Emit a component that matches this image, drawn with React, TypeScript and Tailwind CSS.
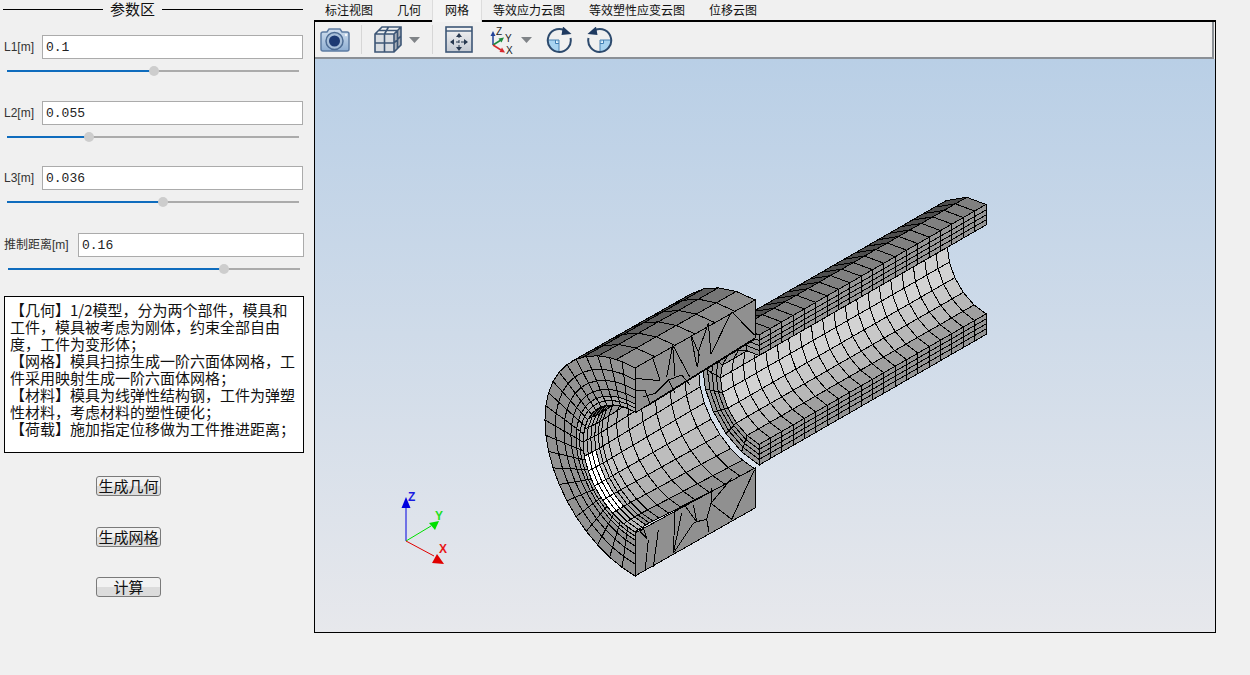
import type { ReactNode } from "react";

type Pt = [number, number];
type Cell = { pts: Pt[]; fill: number };

const params = [
  { label: "L1[m]", value: "0.1", pct: 50.5, gap: "mt-[17px]", labelW: "w-[42px]", inset: "ml-[7px]" },
  { label: "L2[m]", value: "0.055", pct: 28.2, gap: "mt-[29px]", labelW: "w-[42px]", inset: "ml-[7px]" },
  { label: "L3[m]", value: "0.036", pct: 53.4, gap: "mt-[28px]", labelW: "w-[42px]", inset: "ml-[7px]" },
  { label: "推制距离[m]", value: "0.16", pct: 74, gap: "mt-[30px]", labelW: "w-[78px]", inset: "ml-[8px]" },
];

const notes = [
  "【几何】1/2模型，分为两个部件，模具和",
  "工件，模具被考虑为刚体，约束全部自由",
  "度，工件为变形体；",
  "【网格】模具扫掠生成一阶六面体网格，工",
  "件采用映射生成一阶六面体网格；",
  "【材料】模具为线弹性结构钢，工件为弹塑",
  "性材料，考虑材料的塑性硬化；",
  "【荷载】施加指定位移做为工件推进距离；",
];

const tabs = ["标注视图", "几何", "网格", "等效应力云图", "等效塑性应变云图", "位移云图"];

const rad = (d: number) => (d * Math.PI) / 180;
const lerp = (a: Pt, b: Pt, s: number): Pt => [a[0] + (b[0] - a[0]) * s, a[1] + (b[1] - a[1]) * s];

// isometric half ring: t=0 is up, t=90 points away from the viewer, t=180 is down
const at = (c: Pt, r: number, t: number): Pt => [
  c[0] - 0.866 * r * Math.sin(rad(t)),
  c[1] - r * (0.5 * Math.sin(rad(t)) + Math.cos(rad(t))),
];

const ramp = (t: number, stops: number[][]) => {
  for (let i = 1; i < stops.length; i++) {
    if (t <= stops[i][0]) {
      const k = (t - stops[i - 1][0]) / (stops[i][0] - stops[i - 1][0]);
      return stops[i - 1][1] + (stops[i][1] - stops[i - 1][1]) * k;
    }
  }
  return stops[stops.length - 1][1];
};

const innerStops = [[0, 130], [60, 150], [90, 205], [120, 212], [150, 188], [165, 165], [180, 150]];

function workpiece(): Cell[] {
  const F: Pt = [759, 400];
  const B: Pt = [986, 269.5];
  const wp = (s: number, r: number, t: number) => at(lerp(F, B, s), r, t);
  const cells: Cell[] = [];
  const n = 20;
  const layers = [44.5, 49.5, 54.5, 59.5, 65];
  for (let i = 0; i < n; i++) {
    const s0 = i / n;
    const s1 = (i + 1) / n;
    for (let j = 0; j < 10; j++) {
      const t0 = j * 18;
      const t1 = t0 + 18;
      cells.push({
        pts: [wp(s0, 44.5, t0), wp(s1, 44.5, t0), wp(s1, 44.5, t1), wp(s0, 44.5, t1)],
        fill: ramp(t0 + 9, innerStops),
      });
    }
  }
  for (const t of [180, 0]) {
    for (let i = 0; i < n; i++) {
      const s0 = i / n;
      const s1 = (i + 1) / n;
      for (let k = 0; k < 4; k++) {
        cells.push({
          pts: [wp(s0, layers[k], t), wp(s1, layers[k], t), wp(s1, layers[k + 1], t), wp(s0, layers[k + 1], t)],
          fill: 150,
        });
      }
    }
  }
  const rows = [0, 20, 45];
  const rowFill = [128, 78];
  for (let i = 0; i < n; i++) {
    const s0 = i / n;
    const s1 = (i + 1) / n;
    for (let k = 0; k < 2; k++) {
      cells.push({
        pts: [wp(s0, 65, rows[k]), wp(s1, 65, rows[k]), wp(s1, 65, rows[k + 1]), wp(s0, 65, rows[k + 1])],
        fill: rowFill[k],
      });
    }
  }
  for (let j = 0; j < 10; j++) {
    const t0 = j * 18;
    const t1 = t0 + 18;
    for (let k = 0; k < 4; k++) {
      const dark = k === 0 && t0 >= 36 && t0 < 54;
      cells.push({
        pts: [wp(0, layers[k], t0), wp(0, layers[k + 1], t0), wp(0, layers[k + 1], t1), wp(0, layers[k], t1)],
        fill: dark ? 82 : 152,
      });
    }
  }
  return cells;
}

function dieBore(): Cell[] {
  const F: Pt = [635, 472];
  const B: Pt = [755, 404];
  const stations = [0, 0.03, 0.06, 0.09, 0.12, 0.15, 0.2, 0.28, 0.38, 0.5, 0.62, 0.75, 0.88, 1];
  const radius = (s: number) => (s < 0.1 ? 60 - s * 10 : 59 + ((s - 0.1) / 0.9) * 6);
  const cells: Cell[] = [];
  const step = 180 / 14;
  for (let i = stations.length - 2; i >= 0; i--) {
    const s0 = stations[i];
    const s1 = stations[i + 1];
    const c0 = lerp(F, B, s0);
    const c1 = lerp(F, B, s1);
    for (let j = 0; j < 14; j++) {
      const t0 = j * step;
      const t1 = t0 + step;
      const mid = (t0 + t1) / 2;
      let fill = ramp(mid, [[0, 110], [60, 140], [90, 185], [125, 198], [155, 172], [170, 150], [180, 140]]);
      if (s0 < 0.09) {
        if (mid < 70) fill = 60 + mid * 0.6;
        else if (mid < 100) fill = 175;
        else if (mid < 150) fill = 255;
        else fill = 185;
      }
      cells.push({
        pts: [at(c0, radius(s0), t0), at(c1, radius(s1), t0), at(c1, radius(s1), t1), at(c0, radius(s0), t1)],
        fill,
      });
    }
  }
  return cells;
}

function dieShell(): Cell[] {
  const F: Pt = [635, 472];
  const B: Pt = [755, 404];
  const cells: Cell[] = [];
  const rows = [0, 12, 24, 35, 45];
  const rowFill = [142, 118, 92, 66];
  for (let i = 0; i < 6; i++) {
    const c0 = lerp(F, B, i / 6);
    const c1 = lerp(F, B, (i + 1) / 6);
    for (let k = 0; k < 4; k++) {
      cells.push({
        pts: [at(c0, 104, rows[k]), at(c1, 104, rows[k]), at(c1, 104, rows[k + 1]), at(c0, 104, rows[k + 1])],
        fill: rowFill[k],
      });
    }
  }
  const rings = [104, 92, 82, 74, 68, 64, 60];
  const step = 180 / 22;
  for (let j = 0; j < 22; j++) {
    const t0 = j * step;
    const t1 = t0 + step;
    for (let k = 0; k < rings.length - 1; k++) {
      cells.push({
        pts: [at(F, rings[k], t0), at(F, rings[k + 1], t0), at(F, rings[k + 1], t1), at(F, rings[k], t1)],
        fill: k >= 4 ? 168 : 146,
      });
    }
  }
  return cells;
}

const topLines: Pt[][] = [
  [[82, 200], [105, 270]],
  [[143, 165], [125, 262]],
  [[143, 165], [150, 258]],
  [[143, 165], [195, 262]],
  [[198, 135], [215, 228]],
  [[198, 135], [225, 198]],
  [[250, 100], [222, 180], [218, 232]],
  [[320, 65], [258, 192]],
  [[320, 65], [388, 135]],
  [[250, 100], [258, 192]],
  [[30, 265], [85, 270], [105, 270]],
  [[55, 320], [90, 310], [130, 270], [170, 255], [195, 285]],
  [[30, 300], [60, 300], [75, 340]],
  [[130, 270], [150, 310]],
];

const bottomLines: Pt[][] = [
  [[320, 178], [388, 30]],
  [[320, 178], [258, 130]],
  [[258, 85], [258, 130], [245, 178], [252, 215]],
  [[258, 130], [320, 55]],
  [[215, 185], [178, 135]],
  [[215, 185], [245, 178]],
  [[205, 135], [215, 185], [205, 190]],
  [[145, 280], [150, 150]],
  [[145, 280], [170, 160]],
  [[145, 280], [205, 190]],
  [[85, 320], [100, 210]],
  [[60, 335], [70, 240]],
  [[30, 350], [30, 225]],
  [[45, 215], [65, 235], [55, 205], [45, 215]],
];

const zoomed = (lines: Pt[][], ox: number, oy: number) =>
  lines.map((line) => line.map(([x, y]) => `${ox + x / 3},${oy + y / 3}`).join(" "));

const Cells = ({ cells }: { cells: Cell[] }) => (
  <>
    {cells.map((c, i) => {
      const v = Math.round(c.fill);
      return (
        <polygon
          key={i}
          points={c.pts.map((p) => p.join(",")).join(" ")}
          fill={`rgb(${v},${v},${v})`}
          stroke="#000"
          strokeWidth={1}
        />
      );
    })}
  </>
);

function MeshView() {
  return (
    <svg viewBox="315 59 900 572" className="block w-[900px] h-[572px]">
      <g shapeRendering="crispEdges">
        <Cells cells={workpiece()} />
        <Cells cells={dieBore()} />
        <polygon points="635,368 755,300 755,338 635,413" fill="#909090" stroke="#000" />
        <polygon points="635,533 755,468 755,508 635,576" fill="#909090" stroke="#000" />
        <Cells cells={dieShell()} />
        {zoomed(topLines, 625, 290).map((p, i) => (
          <polyline key={i} points={p} fill="none" stroke="#000" />
        ))}
        {zoomed(bottomLines, 625, 460).map((p, i) => (
          <polyline key={i} points={p} fill="none" stroke="#000" />
        ))}
      </g>
      <g>
        <line x1="406" y1="541" x2="406" y2="503" stroke="#0000e0" strokeWidth="1" />
        <polygon points="406,497 410.500,508 401.500,508" fill="#0000e0" />
        <text x="408" y="501" fontFamily="Liberation Sans" fontWeight="700" fontSize="12" fill="#1a1ae0">Z</text>
        <line x1="406" y1="541" x2="431" y2="526" stroke="#00e000" strokeWidth="1" />
        <polygon points="439,521 435,530 429,523" fill="#00e000" />
        <text x="435" y="520" fontFamily="Liberation Sans" fontWeight="700" fontSize="12" fill="#22e022">Y</text>
        <line x1="406" y1="541" x2="434" y2="556" stroke="#e00000" strokeWidth="1" />
        <polygon points="444,564 432,563 437,554" fill="#e00000" />
        <text x="439" y="553" fontFamily="Liberation Sans" fontWeight="700" fontSize="12" fill="#e81818">X</text>
      </g>
    </svg>
  );
}

const ink = "#3c5676";

const IconCamera = () => (
  <svg width="30" height="24" viewBox="0 0 30 24" className="shrink-0">
    <defs>
      <linearGradient id="cam" x1="0" y1="0" x2="0" y2="1">
        <stop offset="0" stopColor="#d2e0ef" />
        <stop offset="1" stopColor="#8eaed2" />
      </linearGradient>
    </defs>
    <path d="M1 6q0-2 2-2h4l2-3h11l2 3h5q2 0 2 2v15q0 2-2 2H3q-2 0-2-2z" fill="url(#cam)" stroke="#5d7ca3" strokeWidth="1.5" />
    <circle cx="14.5" cy="13" r="8.5" fill="#a9c0da" stroke="#4d6c94" strokeWidth="1.5" />
    <circle cx="14.5" cy="13" r="5.5" fill="#1d3a73" />
    <circle cx="26" cy="7" r="1.2" fill="#f5f8fb" />
  </svg>
);

const IconCube = () => (
  <svg width="28" height="27" viewBox="0 0 28 27" className="shrink-0">
    <path d="M1 8 8 1h19v18l-7 7H1z" fill="#d9dde2" />
    <path d="M20 8l7-7v18l-7 7z" fill="#a9afb8" />
    <path d="M1 8 8 1h19l-7 7z" fill="#eef0f2" />
    <path d="M1 8 8 1h19v18l-7 7H1zM1 8h19v18M20 8l7-7M1 17h19M10.500 8v18M4.500 4.500h19M14.500 1l-4 7M20 17l7-7M23.500 4.500v18" fill="none" stroke={ink} strokeWidth="1.6" />
  </svg>
);

const IconFit = () => (
  <svg width="28" height="27" viewBox="0 0 28 27" className="shrink-0">
    <defs>
      <linearGradient id="fit" x1="0" y1="0" x2="0" y2="1">
        <stop offset="0" stopColor="#f4f4f4" />
        <stop offset="1" stopColor="#c3c9d2" />
      </linearGradient>
    </defs>
    <rect x="1" y="1" width="26" height="25" fill="url(#fit)" stroke={ink} strokeWidth="1.6" />
    <path d="M1 5h26" stroke={ink} strokeWidth="1.4" />
    <path d="M14 9v14M6 16h16" stroke="#27384f" strokeWidth="1" strokeDasharray="3 2" />
    <path d="M14 7l-3 4h6zM14 25l-3-4h6zM5 16l4-3v6zM23 16l-4-3v6z" fill="#27384f" />
  </svg>
);

const IconAxes = () => (
  <svg width="24" height="26" viewBox="0 0 24 26" className="shrink-0 overflow-visible">
    <path d="M3 18V7" stroke="#23439a" strokeWidth="1.5" />
    <path d="M3 4 0.500 9h5z" fill="#23439a" />
    <path d="M3 18 11 13" stroke="#1d8a3c" strokeWidth="1.5" />
    <path d="M14 10.500 8.500 11.500l3 4z" fill="#1d8a3c" />
    <path d="M3 18 11 23" stroke="#d8282c" strokeWidth="1.500" />
    <path d="M15 25.500 9.500 25l2.500-4.500z" fill="#d8282c" />
    <text x="6" y="8" fontFamily="Liberation Sans" fontSize="10" fill="#222">Z</text>
    <text x="15" y="15" fontFamily="Liberation Sans" fontSize="10" fill="#222">Y</text>
    <text x="16" y="27" fontFamily="Liberation Sans" fontSize="10" fill="#222">X</text>
  </svg>
);

const IconRotate = ({ flip = false }: { flip?: boolean }) => (
  <svg width="26" height="26" viewBox="0 0 26 26" className={flip ? "shrink-0 -scale-x-100" : "shrink-0"}>
    <path d="M13 13H1.500a11.500 11.500 0 0 0 11.500 11.500z" fill="#a7d3f0" />
    <path d="M9.500 13v3.500H13" fill="#eaf4fb" stroke="#3f7fb5" strokeWidth="1" />
    <path d="M1.500 13h11.500v11.500" fill="none" stroke="#4b83b3" strokeWidth="1" />
    <path d="M18 3A11.500 11.500 0 1 0 24.500 11" fill="none" stroke="#2d4a6d" strokeWidth="2" />
    <path d="M25.500 7 15.500 8 17 -0.500z" fill="#1f3a60" />
  </svg>
);

const Caret = () => (
  <svg width="11" height="6" viewBox="0 0 11 6" className="shrink-0">
    <path d="M0 0h11L5.500 6z" fill="#808488" />
  </svg>
);

const Sep = ({ className }: { className: string }) => (
  <div className={`w-px h-[29px] bg-[#d6d6d6] shrink-0 ${className}`} />
);

const Slider = ({ pct, inset }: { pct: number; inset: string }) => (
  <div className={`relative w-[292px] h-[2px] mt-[11px] bg-[#ababab] ${inset}`}>
    <div className="h-full bg-[#0f6cbd]" style={{ width: `${pct}%` }} />
    <div
      className="absolute top-[-4px] w-[10px] h-[10px] -ml-[5px] rounded-full bg-[#cdcdcd]"
      style={{ left: `${pct}%` }}
    />
  </div>
);

const Button = ({ children, className }: { children: ReactNode; className: string }) => (
  <button
    className={`block ml-[96px] w-[65px] h-[20px] rounded-[3px] border border-[#7a7a7a] bg-linear-to-b from-[#f2f2f2] from-50% to-[#dcdcdc] to-50% text-[15px] leading-[18px] text-[#111] ${className}`}
  >
    {children}
  </button>
);

export default function App() {
  return (
    <div className="flex w-[1250px] h-[675px] overflow-hidden bg-[#f0f0f0] font-['Noto_Sans_CJK_SC',sans-serif] text-[#111]">
      {/* parameters */}
      <div className="w-[313px] shrink-0">
        <div className="flex items-center h-[18px] pl-[3px] pr-[10px]">
          <div className="w-[100px] h-px bg-black" />
          <div className="w-[59px] text-center text-[15px] leading-[18px]">参数区</div>
          <div className="flex-1 h-px bg-black" />
        </div>

        {params.map((p) => (
          <div key={p.label} className={p.gap}>
            <div className="flex items-center h-[24px]">
              <div className={`${p.labelW} shrink-0 pl-[4px] text-[12px] whitespace-nowrap font-['Liberation_Sans','Noto_Sans_CJK_SC',sans-serif] text-[#333]`}>
                {p.label}
              </div>
              <input
                readOnly
                value={p.value}
                className={`h-[24px] ${p.label.startsWith("L") ? "w-[261px]" : "w-[226px]"} border border-[#ababab] bg-white px-[3px] pt-px font-['Liberation_Mono',monospace] text-[13px] text-[#222] outline-none`}
              />
            </div>
            <Slider pct={p.pct} inset={p.inset} />
          </div>
        ))}

        <div className="ml-[4px] mt-[26px] w-[300px] h-[157px] border border-black bg-white pl-[5px] pt-[4px] text-[15px] leading-[17px]">
          {notes.map((n) => (
            <div key={n} className="whitespace-nowrap">{n}</div>
          ))}
        </div>

        <Button className="mt-[23px]">生成几何</Button>
        <Button className="mt-[31px]">生成网格</Button>
        <Button className="mt-[30px]">计算</Button>
      </div>

      {/* viewer */}
      <div className="flex-1 min-w-0">
        <div className="relative z-10 flex h-[20px] text-[12px] leading-[20px]">
          {tabs.map((t) => (
            <div
              key={t}
              className={
                t === "网格"
                  ? "px-3 h-[22px] bg-[#f4f4f4] border-x border-[#dcdcdc] -mx-px"
                  : "px-3"
              }
            >
              {t}
            </div>
          ))}
        </div>
        <div className="ml-px w-[902px] h-[613px] border-t-2 border-x border-b border-black flex flex-col">
          <div className="flex items-center h-[37px] pl-[5px] border-b-2 border-r-2 border-[#8b9096] mr-px shrink-0">
            <IconCamera />
            <Sep className="ml-[11px]" />
            <div className="ml-[12px]"><IconCube /></div>
            <div className="ml-[7px]"><Caret /></div>
            <Sep className="ml-[12px]" />
            <div className="ml-[12px]"><IconFit /></div>
            <div className="ml-[17px]"><IconAxes /></div>
            <div className="ml-[7px]"><Caret /></div>
            <div className="ml-[14px]"><IconRotate /></div>
            <div className="ml-[15px]"><IconRotate flip /></div>
          </div>
          <div className="flex-1 bg-linear-to-b from-[#b9cfe6] to-[#e7e8ec]">
            <MeshView />
          </div>
        </div>
      </div>
    </div>
  );
}
